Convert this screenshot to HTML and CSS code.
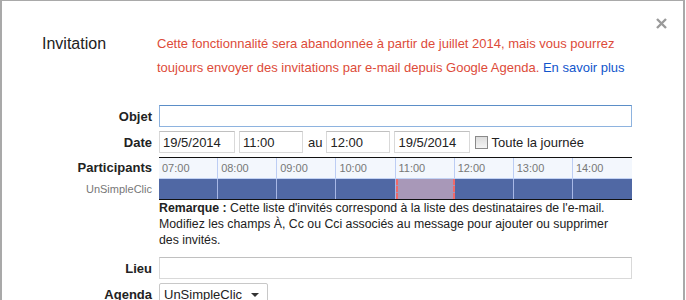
FILE: index.html
```html
<!DOCTYPE html>
<html lang="fr">
<head>
    <meta charset="UTF-8">
    <title>Invitation</title>
    <link rel="stylesheet" href="styles.css">
</head>
<body>
    <div class="dialog">
        <span class="close">
            <svg width="11" height="11" viewBox="0 0 11 11"><path d="M1 1L10 10M10 1L1 10" stroke="#9a9a9a" stroke-width="2.4"/></svg>
        </span>

        <div class="head">
            <h1 class="title">Invitation</h1>
            <p class="notice">Cette fonctionnalité sera abandonnée à partir de juillet 2014, mais vous pourrez toujours envoyer des invitations par e-mail depuis Google Agenda. <a href="#">En savoir plus</a></p>
        </div>

        <div class="row">
            <label class="lbl" for="objet">Objet</label>
            <input type="text" id="objet" class="txt wide focus">
        </div>

        <div class="row">
            <label class="lbl">Date</label>
            <div class="dates">
                <input type="text" class="txt day" value="19/5/2014">
                <input type="text" class="txt hour" value="11:00">
                <span class="au">au</span>
                <input type="text" class="txt hour" value="12:00">
                <input type="text" class="txt day" value="19/5/2014">
                <label class="allday"><span class="box"></span>Toute la journée</label>
            </div>
        </div>

        <div class="row top tight">
            <div class="lbl who">
                <b>Participants</b>
                <span class="guest">UnSimpleClic</span>
            </div>
            <div class="timeline">
                <div class="hours">
                    <span>07:00</span><span>08:00</span><span>09:00</span><span>10:00</span>
                    <span>11:00</span><span>12:00</span><span>13:00</span><span>14:00</span>
                </div>
                <div class="busy">
                    <span></span><span></span><span></span><span></span>
                    <span class="slot"></span><span></span><span></span><span></span>
                </div>
            </div>
        </div>

        <div class="row top">
            <div class="lbl"></div>
            <p class="note"><b>Remarque :</b> Cette liste d'invités correspond à la liste des destinataires de l'e-mail. Modifiez les champs À, Cc ou Cci associés au message pour ajouter ou supprimer des invités.</p>
        </div>

        <div class="row">
            <label class="lbl" for="lieu">Lieu</label>
            <input type="text" id="lieu" class="txt wide">
        </div>

        <div class="row">
            <label class="lbl">Agenda</label>
            <div class="select">UnSimpleClic <span class="arrow"></span></div>
        </div>
    </div>
</body>
</html>
```

FILE: styles.css
```css
body {
    margin: 0;
    background: #fff;
    font-family: Arial, "Liberation Sans", sans-serif;
    color: #222;
    overflow: hidden;
}

.dialog {
    position: relative;
    width: 685px;
    height: 340px;
    border: 1px solid #a9a9a9;
    border-left-width: 2px;
    border-right-width: 2px;
    box-sizing: border-box;
    background: #fff;
}

.close {
    position: absolute;
    top: 17px;
    right: 16px;
    line-height: 0;
}

.head {
    display: flex;
    padding-top: 31px;
    height: 73px;
}

.title {
    margin: 0;
    width: 155px;
    padding-left: 40px;
    box-sizing: border-box;
    font-size: 16px;
    font-weight: normal;
    line-height: 24px;
    color: #222;
}

.notice {
    margin: 0;
    width: 474px;
    font-size: 13px;
    line-height: 24px;
    color: #dd4b39;
}

.notice a {
    color: #15c;
    text-decoration: none;
}

.row {
    display: flex;
    align-items: center;
    margin-bottom: 4px;
}

.row.top {
    align-items: flex-start;
}

.row.tight {
    margin-bottom: 0;
}

.lbl {
    width: 150px;
    margin-right: 7px;
    text-align: right;
    font-size: 13px;
    font-weight: bold;
    color: #222;
}

.txt {
    height: 22px;
    margin: 0;
    padding: 1px 3px;
    border: 1px solid #d9d9d9;
    border-top-color: #c0c0c0;
    box-sizing: border-box;
    font-family: inherit;
    font-size: 13px;
    color: #222;
    outline: none;
}

.wide {
    width: 473px;
}

.focus {
    border-color: #8eb3df;
    border-top-color: #5b8ec7;
}

.dates {
    display: flex;
    align-items: center;
    gap: 4px;
}

.day {
    width: 76px;
}

.hour {
    width: 64px;
}

.au {
    font-size: 13px;
    margin: 0 0 0 1px;
}

.allday {
    display: flex;
    align-items: center;
    font-size: 13px;
    margin-left: 1px;
}

.box {
    width: 11px;
    height: 11px;
    margin-right: 3px;
    border: 1px solid #8a8a8a;
    background: linear-gradient(#dcdcdc, #f4f4f4);
}

.who {
    display: flex;
    flex-direction: column;
    padding-top: 1px;
}

.who b {
    line-height: 20px;
}

.guest {
    font-size: 11px;
    font-weight: normal;
    color: #777;
    line-height: 22px;
}

.timeline {
    width: 473px;
    border-top: 1px solid #111;
    border-bottom: 1px solid #111;
}

.hours,
.busy {
    display: grid;
    grid-template-columns: repeat(8, 1fr);
    height: 20px;
}

.hours {
    background: #f3f7fd;
    border-bottom: 1px solid #c3d3f5;
}

.hours span {
    border-right: 1px solid #bccdf4;
    padding-left: 3px;
    font-size: 11px;
    line-height: 20px;
    color: #777;
}

.busy span {
    background: #5068a4;
    border-right: 1px solid #a8b8e6;
}

.hours span:last-child,
.busy span:last-child {
    border-right: none;
}

.busy .slot {
    background: #a898b8;
    border-left: 2px dashed #ef6a6a;
    border-right: 2px dashed #ef6a6a;
}

.note {
    margin: 0 0 5px;
    width: 462px;
    font-size: 12.3px;
    line-height: 16px;
    color: #222;
}

.select {
    display: flex;
    align-items: center;
    height: 21px;
    padding: 0 8px 0 4px;
    border: 1px solid #c8c8c8;
    border-radius: 2px;
    font-size: 13px;
    color: #222;
}

.arrow {
    margin-left: 9px;
    border-left: 4px solid transparent;
    border-right: 4px solid transparent;
    border-top: 4px solid #333;
}
```
